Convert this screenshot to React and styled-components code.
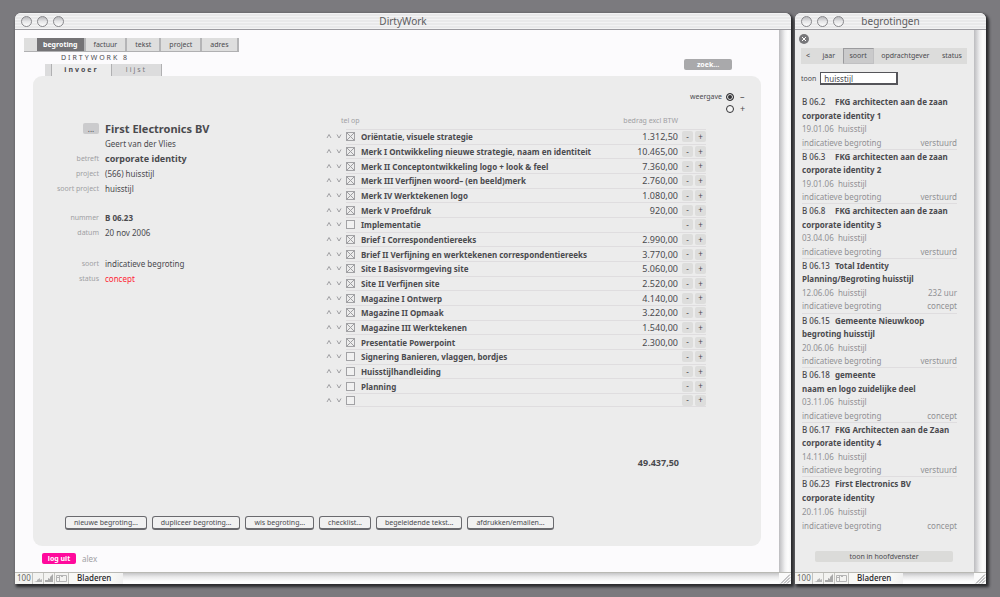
import { useState } from 'react';
import styled, { createGlobalStyle, css } from 'styled-components';

const GlobalStyle = createGlobalStyle`
  * {
    box-sizing: border-box;
  }
  body {
    margin: 0;
    background: #7b7a7e;
    color: #4a4a4e;
    font-family: 'Noto Sans', 'Open Sans', sans-serif;
    font-size: 8px;
    line-height: 13px;
  }
  button,
  input {
    margin: 0;
    padding: 0;
    color: inherit;
    font: inherit;
  }
`;

const Desktop = styled.div`
  display: grid;
  grid-template-columns: minmax(0, 1fr) 191px;
  gap: 4px;
  min-height: 100vh;
  padding: 13px 14px 13px 15px;
`;

const Window = styled.section`
  display: flex;
  flex-direction: column;
  border-radius: 6px 6px 0 0;
  background: #fcfbfd;
  box-shadow: 2px 2px 3px 1px #2a2a2d;
`;

const TitleBar = styled.header`
  display: grid;
  grid-template-columns: 56px 1fr 56px;
  align-items: center;
  height: 17px;
  padding: 0 6px;
  border-bottom: 1px solid #9c9ba0;
  border-radius: 6px 6px 0 0;
  background: repeating-linear-gradient(#f3f3f4 0 1px, #e9e9ea 1px 3px);
  & > h1 {
    margin: 0;
    color: #5c5c60;
    font-size: 10px;
    font-weight: 400;
    line-height: 16px;
    text-align: center;
  }
`;

const Lights = styled.div`
  display: flex;
  gap: 5px;
  & > button {
    width: 11px;
    height: 11px;
    border: 1px solid #88888c;
    border-radius: 50%;
    background: linear-gradient(#b9b9bc, #e6e6e8 50%, #fdfdfd);
  }
`;

const Middle = styled.div`
  display: grid;
  grid-template-columns: minmax(0, 1fr) 12px;
  flex: 1;
`;

const Scroll = styled.div`
  background: linear-gradient(to right, #bcbcbf, #d6d6d8 25%, #f1f1f2 50%, #fdfdfd 75%, #f4f4f5);
`;

const MainContent = styled.main`
  display: flex;
  flex-direction: column;
  padding: 8px 18px 7px;
`;

const TopTabs = styled.nav`
  display: flex;
  align-self: flex-start;
  height: 14px;
  margin-left: -9px;
  padding-left: 13px;
  border-bottom: 1px solid #b0b0b2;
  background: #dedede;
`;

const TopTab = styled.button`
  padding: 0 ${(props) => (props.$active ? 6 : 8)}px;
  border: 0;
  border-right: 2px solid #b4b4b6;
  background: ${(props) => (props.$active ? '#747376' : '#dedede')};
  color: ${(props) => (props.$active ? '#fff' : '#4a4a4e')};
  font-size: 7px;
  font-weight: ${(props) => (props.$active ? 700 : 400)};
  line-height: 13px;
`;

const SubHeader = styled.div`
  display: flex;
  align-items: center;
  justify-content: space-between;
  height: 24px;
`;

const SubTitles = styled.div`
  align-self: stretch;
  & > h2 {
    margin: 0 0 0 28px;
    font-size: 7px;
    font-weight: 400;
    letter-spacing: 2px;
    line-height: 12px;
  }
`;

const SubTabs = styled.div`
  display: flex;
  height: 12px;
  margin-left: 12px;
  padding-left: 6px;
  background: #dcdcdd;
`;

const SubTab = styled.button`
  width: ${(props) => (props.$active ? 60 : 51)}px;
  border: 0;
  border-left: 1px solid #b0b0b2;
  border-right: ${(props) => (props.$active ? 0 : 1)}px solid #b0b0b2;
  background: ${(props) => (props.$active ? '#ececec' : '#dcdcdd')};
  color: ${(props) => (props.$active ? '#4a4a4e' : '#77777b')};
  font-size: 7px;
  font-weight: ${(props) => (props.$active ? 700 : 400)};
  letter-spacing: 2px;
  line-height: 12px;
`;

const SearchButton = styled.button`
  width: 48px;
  height: 11px;
  margin: 0 29px 0 0;
  border: 0;
  border-radius: 2px;
  background: #a9a9ab;
  color: #fff;
  font-size: 7px;
  font-weight: 700;
  line-height: 11px;
`;

const Panel = styled.div`
  display: flex;
  flex: 1;
  flex-direction: column;
  border-radius: 9px;
  padding: 15px 13px 16px 32px;
  background: #ececec;
`;

const ViewChoice = styled.fieldset`
  display: grid;
  grid-template-columns: auto 10px 8px;
  align-items: center;
  align-self: flex-end;
  column-gap: 4px;
  margin: 0;
  padding: 0;
  border: 0;
  font-size: 7px;
  line-height: 12px;
  & > label {
    grid-column: 3;
    font-size: 9px;
  }
`;

const Radio = styled.input`
  appearance: none;
  grid-column: 2;
  width: 8px;
  height: 8px;
  border: 1px solid #333336;
  border-radius: 50%;
  background: #f4f4f4;
  &:checked {
    background: #333336;
    box-shadow: inset 0 0 0 1px #ececec;
  }
`;

const Columns = styled.div`
  display: grid;
  grid-template-columns: 258px 383px;
`;

const Details = styled.dl`
  display: grid;
  grid-template-columns: 34px 1fr;
  grid-auto-rows: min-content;
  column-gap: 6px;
  margin: 6px 0 0;
  line-height: 15px;
  & > dt {
    display: flex;
    justify-content: flex-end;
    align-items: center;
    color: #a0a0a3;
    font-size: 7px;
    white-space: nowrap;
  }
  & > dd {
    margin: 0;
  }
`;

const Value = styled.dd`
  color: ${(props) => (props.$alert ? '#ff1f35' : '#4a4a4e')};
  font-size: ${(props) => props.$size || 8}px;
  font-weight: ${(props) => (props.$bold ? 700 : 400)};
`;

const Gap = styled.div`
  grid-column: 1 / -1;
  height: ${(props) => props.$height}px;
`;

const MoreButton = styled.button`
  width: 16px;
  height: 11px;
  border: 0;
  border-radius: 2px;
  background: #cbcbcd;
  color: #4a4a4e;
  font-size: 8px;
  line-height: 7px;
`;

const Budget = styled.table`
  width: 383px;
  height: 292px;
  border-spacing: 0;
  & th,
  & td {
    padding: 0;
    line-height: 13px;
    white-space: nowrap;
  }
  & th {
    height: 14px;
    color: #a0a0a3;
    font-size: 7px;
    font-weight: 400;
    line-height: 12px;
    text-align: left;
    vertical-align: top;
  }
  & th:first-child {
    padding-left: 18px;
  }
  & tbody td {
    border-top: 1px solid #dfdddf;
  }
  & tbody td:first-child {
    border-top: 0;
  }
  & tbody tr:last-child td:not(:first-child) {
    border-bottom: 1px solid #dfdddf;
  }
`;

const amount = css`
  text-align: right !important;
`;

const AmountHead = styled.th`
  ${amount}
`;

const Amount = styled.td`
  ${amount}
  font-size: 9px;
`;

const Task = styled.td`
  font-weight: 700;
`;

const MoveButtons = styled.div`
  display: flex;
  gap: 4px;
  padding-left: 3px;
`;

const MoveButton = styled.button`
  display: flex;
  width: 6px;
  border: 0;
  background: none;
  color: #8d8d90;
`;

const Check = styled.input`
  appearance: none;
  display: block;
  width: 9px;
  height: 9px;
  border: 1px solid #a2a2a5;
  background: #f1f1f1;
  &:checked {
    background: linear-gradient(45deg, transparent 45%, #9e9ea1 45% 55%, transparent 55%),
      linear-gradient(-45deg, transparent 45%, #9e9ea1 45% 55%, transparent 55%);
  }
`;

const RowButtons = styled.div`
  display: flex;
  justify-content: flex-end;
  gap: 2px;
  & > button {
    width: 11px;
    height: 11px;
    border: 0;
    border-radius: 2px;
    background: #dddddc;
    line-height: 10px;
  }
`;

const Total = styled.div`
  align-self: flex-end;
  margin: 49px 69px 0 0;
  font-size: 9px;
  font-weight: 700;
`;

const Actions = styled.div`
  display: flex;
  gap: 5px;
  margin-top: auto;
`;

const ActionButton = styled.button`
  height: 14px;
  padding: 0 8px;
  border: 1px solid #6a6a6e;
  border-bottom-width: 2px;
  border-radius: 3px;
  background: #f1f1f1;
  font-size: 7px;
  line-height: 11px;
`;

const Session = styled.div`
  display: flex;
  align-items: center;
  gap: 6px;
  margin: 6px 0 0 9px;
  color: #a0a0a3;
`;

const LogoutButton = styled.button`
  width: 34px;
  height: 11px;
  border: 0;
  border-radius: 2px;
  background: #ff0a9c;
  color: #fff;
  font-size: 7px;
  font-weight: 700;
  line-height: 11px;
`;

const StatusRow = styled.footer`
  display: grid;
  grid-template-columns: 18px 11px 11px 14px 54px minmax(0, 1fr) 12px;
  height: 12px;
  border-top: 1px solid #b9b9b4;
  background: linear-gradient(#c6c6c8, #e9e9ea 35%, #fdfdfd 75%);
  line-height: 10px;
  & > * {
    background: #f3f3f1;
  }
  & > :nth-child(-n + 4) {
    border: 0;
    border-right: 1px solid #c4c4c0;
  }
  & > span:first-child {
    padding-left: 2px;
    color: #66665f;
  }
  & > strong {
    grid-column: 5;
    padding-left: 8px;
    background: linear-gradient(to right, #f8f8f6 80%, #f0f0f0);
    color: #222225;
    font-weight: 500;
  }
  & > :last-child {
    grid-column: 7;
    background: #fafafa;
  }
  & svg {
    display: block;
  }
`;

const ListContent = styled.aside`
  display: flex;
  flex-direction: column;
  padding: 4px 7px 10px 6px;
  background: #ececec;
`;

const CloseButton = styled.button`
  display: flex;
  align-items: center;
  justify-content: center;
  width: 10px;
  height: 10px;
  margin-left: -2px;
  border: 0;
  border-radius: 50%;
  background: #77777a;
  color: #fff;
`;

const FilterTabs = styled.nav`
  display: flex;
  justify-content: space-between;
  height: 16px;
  margin-top: 4px;
  background: #dcdcdb;
`;

const FilterTab = styled.button`
  padding: 0 5px;
  border: 0;
  background: none;
  font-size: 7px;
  line-height: 14px;
  ${(props) =>
    props.$active &&
    css`
      padding: 0 6px;
      border: 1px solid #9b9b9e;
      border-right-color: #c0c0c2;
      border-bottom-color: #c0c0c2;
      background: #cacacb;
    `}
`;

const Search = styled.label`
  display: flex;
  align-items: center;
  gap: 4px;
  margin-top: 8px;
  font-size: 7px;
  & > input {
    width: 78px;
    height: 13px;
    padding: 0 3px;
    border: 1px solid #55555a;
    border-right-width: 2px;
    border-bottom-width: 2px;
    border-radius: 0;
    background: #fff;
    font-size: 8px;
  }
`;

const Quotes = styled.ul`
  display: grid;
  grid-template-rows: repeat(8, 1fr);
  height: 437px;
  margin: 10px 10px 0 1px;
  padding: 0;
  list-style: none;
`;

const Quote = styled.li`
  display: flex;
  flex-direction: column;
  justify-content: space-between;
  border-bottom: 1px solid #dfdddf;
  &:last-child {
    border-bottom: 0;
  }
  & > div {
    display: flex;
    justify-content: space-between;
    color: #919194;
  }
  & > strong > span {
    display: inline-block;
    min-width: 33px;
    font-weight: 500;
  }
`;

const ShowButton = styled.button`
  align-self: center;
  width: 138px;
  height: 11px;
  margin-top: auto;
  border: 0;
  border-radius: 2px;
  background: #dbdbd9;
  font-size: 7px;
  line-height: 11px;
`;

const tasks = [
  ['Oriëntatie, visuele strategie', '1.312,50'],
  ['Merk I Ontwikkeling nieuwe strategie, naam en identiteit', '10.465,00'],
  ['Merk II Conceptontwikkeling logo + look & feel', '7.360,00'],
  ['Merk III Verfijnen woord– (en beeld)merk', '2.760,00'],
  ['Merk IV Werktekenen logo', '1.080,00'],
  ['Merk V Proefdruk', '920,00'],
  ['Implementatie', ''],
  ['Brief I Correspondentiereeks', '2.990,00'],
  ['Brief II Verfijning en werktekenen correspondentiereeks', '3.770,00'],
  ['Site I Basisvormgeving site', '5.060,00'],
  ['Site II Verfijnen site', '2.520,00'],
  ['Magazine I Ontwerp', '4.140,00'],
  ['Magazine II Opmaak', '3.220,00'],
  ['Magazine III Werktekenen', '1.540,00'],
  ['Presentatie Powerpoint', '2.300,00'],
  ['Signering Banieren, vlaggen, bordjes', ''],
  ['Huisstijlhandleiding', ''],
  ['Planning', ''],
  ['', ''],
];

const quotes = [
  ['B 06.2', 'FKG architecten aan de zaan', 'corporate identity 1', '19.01.06', '', 'verstuurd'],
  ['B 06.3', 'FKG architecten aan de zaan', 'corporate identity 2', '19.01.06', '', 'verstuurd'],
  ['B 06.8', 'FKG architecten aan de zaan', 'corporate identity 3', '03.04.06', '', 'verstuurd'],
  ['B 06.13', 'Total Identity', 'Planning/Begroting huisstijl', '12.06.06', '232 uur', 'concept'],
  ['B 06.15', 'Gemeente Nieuwkoop', 'begroting huisstijl', '20.06.06', '', 'verstuurd'],
  ['B 06.18', 'gemeente', 'naam en logo zuidelijke deel', '03.11.06', '', 'concept'],
  ['B 06.17', 'FKG Architecten aan de Zaan', 'corporate identity 4', '14.11.06', '', 'verstuurd'],
  ['B 06.23', 'First Electronics BV', 'corporate identity', '20.11.06', '', 'concept'],
];

const actions = [
  'nieuwe begroting...',
  'dupliceer begroting...',
  'wis begroting...',
  'checklist...',
  'begeleidende tekst...',
  'afdrukken/emailen...',
];

const Title = ({ children }) => (
  <TitleBar>
    <Lights>
      <button aria-label="sluit" />
      <button aria-label="minimaliseer" />
      <button aria-label="vergroot" />
    </Lights>
    <h1>{children}</h1>
  </TitleBar>
);

const Chevron = ({ down }) => (
  <svg width="6" height="6" viewBox="0 0 6 6" fill="none" stroke="currentColor" strokeWidth="0.8">
    <path d={down ? 'M1 1.500L3 5l2-3.500' : 'M1 5L3 1.500 5 5'} />
  </svg>
);

const Status = () => (
  <StatusRow>
    <span>100</span>
    <button aria-label="zoom uit">
      <svg width="10" height="11" viewBox="0 0 10 11" fill="#b4b4b4">
        <path d="M1 9h8V6L7 7V5L4 7v1L1 9z" />
      </svg>
    </button>
    <button aria-label="zoom in">
      <svg width="10" height="11" viewBox="0 0 10 11" fill="#a9a9a9">
        <path d="M1 9h8V1L6 4v2L4 5v2L1 7z" />
      </svg>
    </button>
    <button aria-label="statusgebied">
      <svg width="13" height="11" viewBox="0 0 13 11" fill="none" stroke="#b4b4b4">
        <path d="M1.500 2.500h10v6h-10zM4.500 2.500v6M2 4.500h2M6 3.500h2" />
      </svg>
    </button>
    <strong>Bladeren</strong>
    <div>
      <svg width="12" height="11" viewBox="0 0 12 11" stroke="#8c8c8f">
        <path d="M2 10.500L11 1.500M5 10.500L11 4.500M8 10.500L11 7.500" />
      </svg>
    </div>
  </StatusRow>
);

const TaskRow = ({ name, price }) => (
  <tr>
    <td>
      <MoveButtons>
        <MoveButton aria-label="omhoog">
          <Chevron />
        </MoveButton>
        <MoveButton aria-label="omlaag">
          <Chevron down />
        </MoveButton>
      </MoveButtons>
    </td>
    <td>
      <Check type="checkbox" aria-label={name || 'leeg'} defaultChecked={price !== ''} />
    </td>
    <Task>{name}</Task>
    <Amount>{price}</Amount>
    <td>
      <RowButtons>
        <button>-</button>
        <button>+</button>
      </RowButtons>
    </td>
  </tr>
);

const App = () => {
  const [query, setQuery] = useState('huisstijl');

  return (
    <>
      <GlobalStyle />
      <Desktop>
        <Window>
          <Title>DirtyWork</Title>
          <Middle>
            <MainContent>
              <TopTabs>
                <TopTab $active>begroting</TopTab>
                <TopTab>factuur</TopTab>
                <TopTab>tekst</TopTab>
                <TopTab>project</TopTab>
                <TopTab>adres</TopTab>
              </TopTabs>
              <SubHeader>
                <SubTitles>
                  <h2>DIRTYWORK 8</h2>
                  <SubTabs>
                    <SubTab $active>invoer</SubTab>
                    <SubTab>lijst</SubTab>
                  </SubTabs>
                </SubTitles>
                <SearchButton>zoek...</SearchButton>
              </SubHeader>
              <Panel>
                <ViewChoice>
                  <span>weergave</span>
                  <Radio type="radio" name="view" id="view-less" defaultChecked />
                  <label htmlFor="view-less">–</label>
                  <Radio type="radio" name="view" id="view-more" />
                  <label htmlFor="view-more">+</label>
                </ViewChoice>
                <Columns>
                  <Details>
                    <dt>
                      <MoreButton>...</MoreButton>
                    </dt>
                    <Value $bold $size={11}>First Electronics BV</Value>
                    <dt />
                    <Value>Geert van der Vlies</Value>
                    <dt>betreft</dt>
                    <Value $bold $size={9}>corporate identity</Value>
                    <dt>project</dt>
                    <Value>(566) huisstijl</Value>
                    <dt>soort project</dt>
                    <Value>huisstijl</Value>
                    <Gap $height={14} />
                    <dt>nummer</dt>
                    <Value $bold>B 06.23</Value>
                    <dt>datum</dt>
                    <Value>20 nov 2006</Value>
                    <Gap $height={16} />
                    <dt>soort</dt>
                    <Value>indicatieve begroting</Value>
                    <dt>status</dt>
                    <Value $alert>concept</Value>
                  </Details>
                  <Budget>
                    <colgroup>
                      <col width="23" />
                      <col width="15" />
                      <col />
                      <col width="70" />
                      <col width="28" />
                    </colgroup>
                    <thead>
                      <tr>
                        <th colSpan="3">tel op</th>
                        <AmountHead>bedrag excl BTW</AmountHead>
                        <th />
                      </tr>
                    </thead>
                    <tbody>
                      {tasks.map(([name, price], i) => (
                        <TaskRow key={i} name={name} price={price} />
                      ))}
                    </tbody>
                  </Budget>
                </Columns>
                <Total>49.437,50</Total>
                <Actions>
                  {actions.map((label) => (
                    <ActionButton key={label}>{label}</ActionButton>
                  ))}
                </Actions>
              </Panel>
              <Session>
                <LogoutButton>log uit</LogoutButton>
                <span>alex</span>
              </Session>
            </MainContent>
            <Scroll />
          </Middle>
          <Status />
        </Window>
        <Window>
          <Title>begrotingen</Title>
          <Middle>
            <ListContent>
              <CloseButton aria-label="sluit lijst">
                <svg width="4" height="4" viewBox="0 0 4 4" stroke="#fff">
                  <path d="M0 0l4 4M4 0L0 4" />
                </svg>
              </CloseButton>
              <FilterTabs>
                <FilterTab>&lt;</FilterTab>
                <FilterTab>jaar</FilterTab>
                <FilterTab $active>soort</FilterTab>
                <FilterTab>opdrachtgever</FilterTab>
                <FilterTab>status</FilterTab>
              </FilterTabs>
              <Search>
                toon
                <input value={query} onChange={(e) => setQuery(e.target.value)} />
              </Search>
              <Quotes>
                {quotes.map(([code, client, subject, date, hours, state]) => (
                  <Quote key={code}>
                    <strong>
                      <span>{code}</span>
                      {client}
                    </strong>
                    <strong>{subject}</strong>
                    <div>
                      <span>{date}&nbsp; huisstijl</span>
                      <span>{hours}</span>
                    </div>
                    <div>
                      <span>indicatieve begroting</span>
                      <span>{state}</span>
                    </div>
                  </Quote>
                ))}
              </Quotes>
              <ShowButton>toon in hoofdvenster</ShowButton>
            </ListContent>
            <Scroll />
          </Middle>
          <Status />
        </Window>
      </Desktop>
    </>
  );
};

export default App;
